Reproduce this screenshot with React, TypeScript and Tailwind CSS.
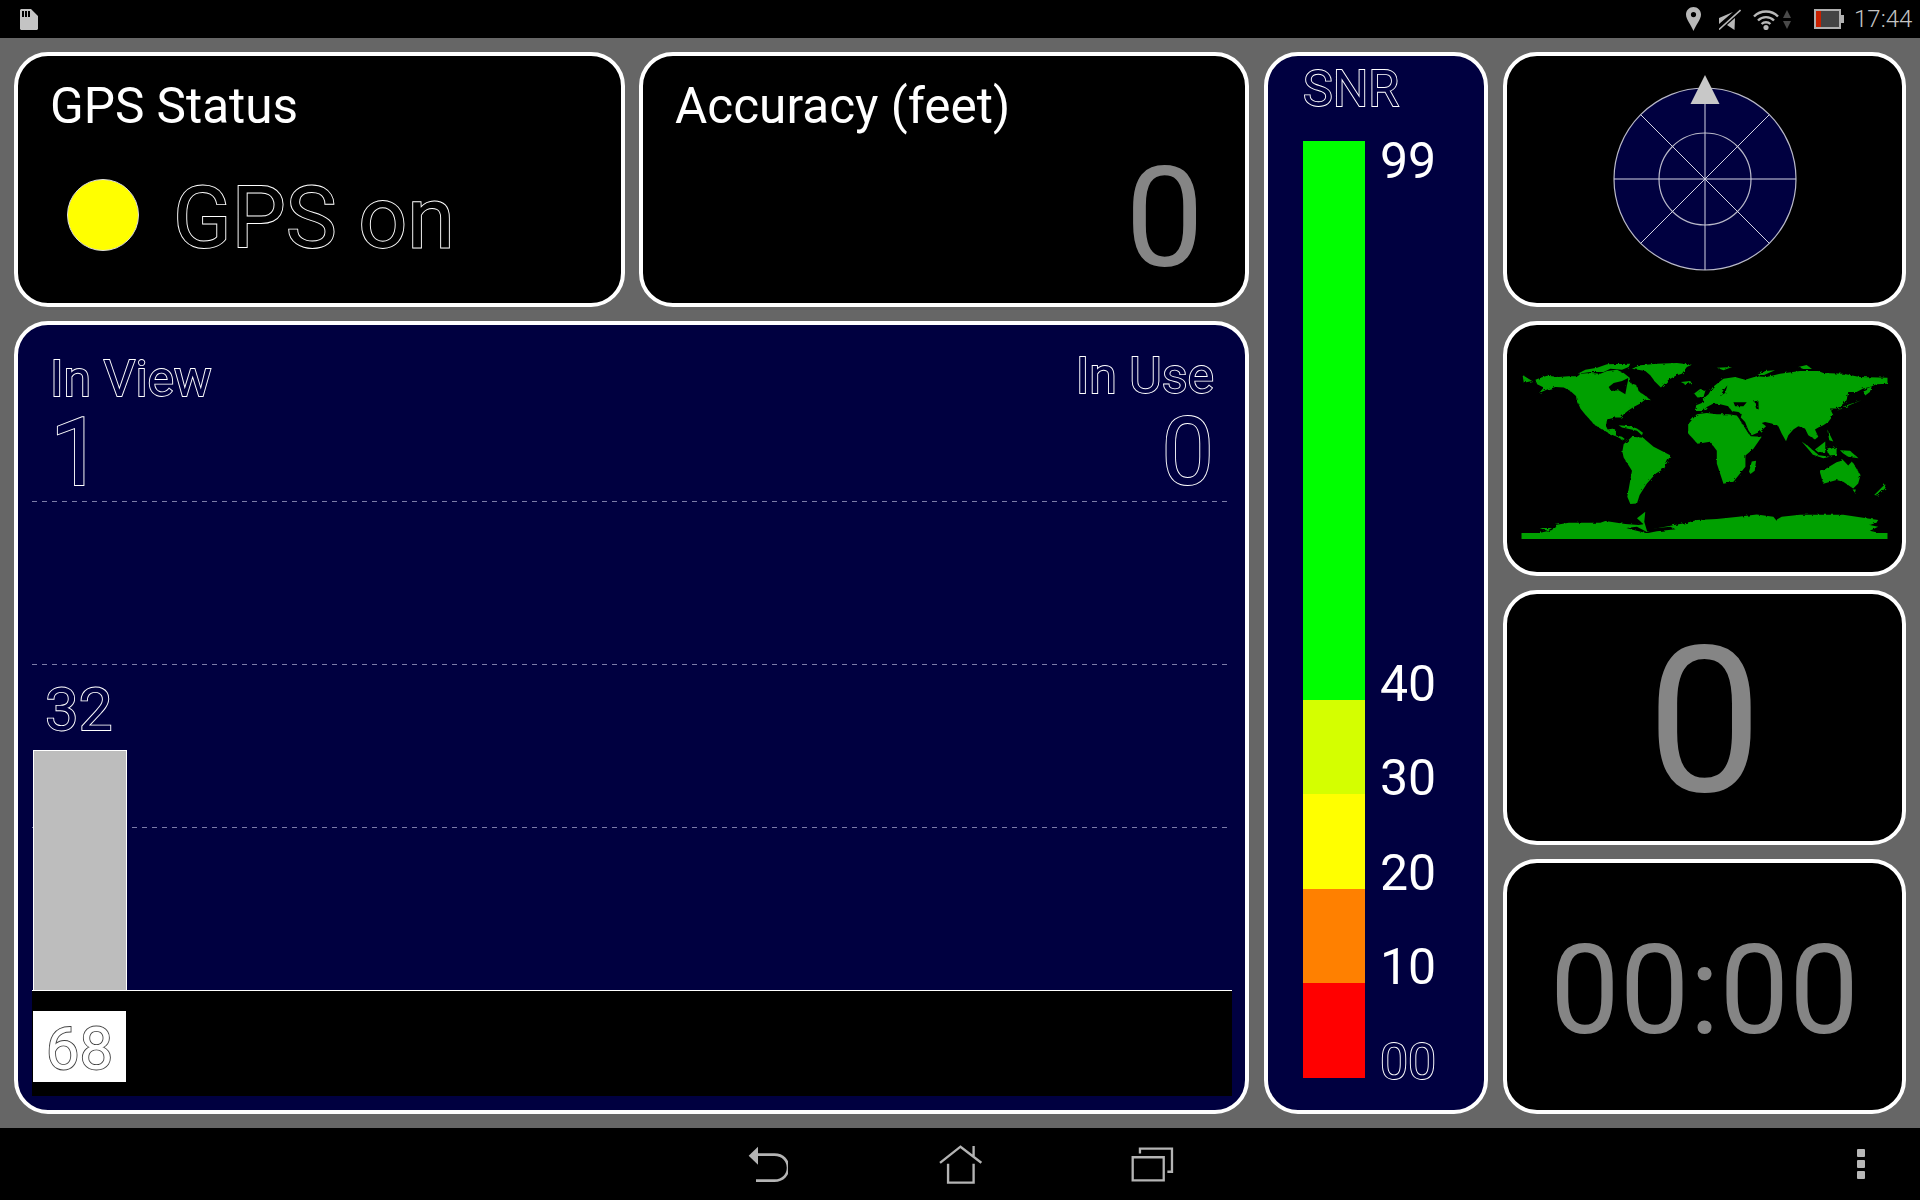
const outlineNavy = "text-[#000040] [-webkit-text-stroke:1.8px_#ffffff] [paint-order:stroke_fill]";
const outlineBlack = "text-black [-webkit-text-stroke:1.8px_#ffffff] [paint-order:stroke_fill]";
const outlineWhite = "text-white [-webkit-text-stroke:1.8px_#404040] [paint-order:stroke_fill]";
const card = "rounded-[34px] border-4 border-white";
const dashed =
  "absolute left-0 w-[1195px] h-px bg-[repeating-linear-gradient(90deg,#7c7ca8_0,#7c7ca8_5px,transparent_5px,transparent_10px)]";

const StatusIcons = () => (
  <div className="flex items-center h-full">
    {/* location pin */}
    <svg width="15" height="24" viewBox="0 0 15 24" className="ml-[1686px]">
      <path
        fillRule="evenodd"
        d="M7.5 0C3.4 0 0 3.3 0 7.5 0 12.5 5 17.5 7.5 24 10 17.5 15 12.5 15 7.5 15 3.3 11.6 0 7.5 0ZM7.5 5a2.6 2.6 0 1 1 0 5.2 2.6 2.6 0 0 1 0-5.2Z"
        fill="#b8b8b8"
      />
    </svg>
    {/* silent */}
    <svg width="22" height="21" viewBox="0 0 22 21" className="ml-[18px]">
      <path d="M0 9 14 3 0 15ZM8 16 16 9 15.5 21Z" fill="#b8b8b8" />
      <path d="M0 20.5 21.5 1" stroke="#b8b8b8" strokeWidth="1.6" />
    </svg>
    {/* wifi */}
    <svg width="26" height="21" viewBox="0 0 26 21" fill="none" stroke="#b8b8b8" className="ml-[12px]">
      <path d="M1 7.5C7.5 .8 18.5 .8 25 7.5" strokeWidth="2.4" />
      <path d="M5 11.5C9.5 7 16.5 7 21 11.5" strokeWidth="2.4" />
      <path d="M8.6 15C11 12.6 15 12.6 17.4 15" strokeWidth="2.4" />
      <circle cx="13" cy="18.5" r="2.6" fill="#b8b8b8" stroke="none" />
    </svg>
    <svg width="8" height="19" viewBox="0 0 8 19" className="ml-[4px]">
      <path d="M4 0 8 8 0 8Z M0 11 8 11 4 19Z" fill="#4a4a4a" />
    </svg>
    {/* battery */}
    <div className="ml-[23px] flex items-center">
      <div className="w-[27px] h-[20px] border-2 border-[#b0b0b0] bg-[#444] flex">
        <div className="w-[5px] bg-[#c82000]" />
      </div>
      <div className="w-[3px] h-[8px] bg-[#b0b0b0]" />
    </div>
    <span className="ml-[10px] font-['Roboto',sans-serif] font-light text-[24px] text-[#c4c4c4] leading-none">
      17:44
    </span>
  </div>
);

const SnrBar = () => {
  const rows = [
    { color: "bg-[#00ff00]", h: "h-[559px]", top: "99", bottom: "40" },
    { color: "bg-[#d4ff00]", h: "h-[94px]", bottom: "30" },
    { color: "bg-[#ffff00]", h: "h-[95px]", bottom: "20" },
    { color: "bg-[#ff8000]", h: "h-[94px]", bottom: "10" },
    { color: "bg-[#ff0000]", h: "h-[95px]", bottom: "00", hollow: true },
  ];
  return (
    <div className="mt-[27px] ml-[35px] flex flex-col">
      {rows.map((r) => (
        <div key={r.bottom} className={`flex ${r.h}`}>
          <div className={`w-[62px] ${r.color}`} />
          <div className="ml-[15px] flex flex-col justify-between text-[50px] leading-[50px] text-white">
            <span className="-mt-[5px]">{r.top}</span>
            <span className={`-mb-[9px] ${r.hollow ? outlineNavy : ""}`}>{r.bottom}</span>
          </div>
        </div>
      ))}
    </div>
  );
};

const Compass = () => (
  <svg width="190" height="200" viewBox="0 0 190 200">
    <circle cx="95" cy="108" r="91" fill="#000040" stroke="#b8b8c8" strokeWidth="1.2" />
    <circle cx="95" cy="108" r="46" fill="none" stroke="#b8b8c8" strokeWidth="1.2" />
    <path d="M4 108H186M95 17V199M30.7 43.7 159.3 172.3M159.3 43.7 30.7 172.3" stroke="#d4d4e4" strokeWidth="1" />
    <path d="M95 4 109.5 33H80.5Z" fill="#c8c8c8" />
  </svg>
);

// traced by hand from the picture, the filter roughens the coast lines
const WorldMap = () => (
  <svg width="367" height="176" viewBox="93 68 1100 529" fill="#00a000">
    <defs>
      <filter id="coast" x="-2%" y="-2%" width="104%" height="104%">
        <feTurbulence type="fractalNoise" baseFrequency="0.09" numOctaves="2" seed="4" />
        <feDisplacementMap in="SourceGraphic" scale="9" />
      </filter>
    </defs>
    <g filter="url(#coast)">
      {/* north america */}
      <path d="M96 104 125 122 100 127ZM135 118 150 112 170 106 205 110 235 108 262 108 270 100 300 98 330 100 350 92 380 88 400 98 418 112 420 128 440 135 445 152 470 170 482 180 465 178 450 190 430 200 415 210 400 222 392 232 375 232 350 238 347 258 352 268 370 265 378 272 375 285 395 290 408 300 395 298 380 290 355 280 325 262 308 250 300 240 282 220 270 205 262 185 260 170 240 152 220 142 195 140 170 148 146 158 160 142 140 132Z" />
      <path d="M262 100 285 88 320 82 350 72 420 70 415 80 395 88 360 85 340 95 300 95Z" />
      <path d="M385 255 420 258 440 265 458 278 455 285 440 272 410 265 395 262Z" />
      {/* greenland, iceland */}
      <path d="M425 85 450 75 500 70 560 68 605 73 590 80 575 100 560 105 535 118 512 142 495 125 480 105 465 92Z" />
      <path d="M572 125 600 122 604 128 585 132Z" />
      {/* south america */}
      <path d="M400 312 425 290 458 293 490 320 540 345 522 385 497 400 470 430 448 465 440 490 420 492 411 470 420 420 425 392 400 352 396 335Z" />
      {/* africa */}
      <path d="M594 252 620 222 650 218 680 222 715 222 740 226 760 252 782 288 815 290 790 326 766 346 766 380 730 425 700 431 680 370 680 332 660 305 622 311 594 280Z" />
      <path d="M785 364 798 362 794 392 781 402 777 395Z" />
      {/* eurasia */}
      <path d="M615 212 618 195 635 188 645 170 655 162 668 140 700 115 735 110 765 118 800 108 830 110 870 100 930 92 985 92 1000 98 1060 100 1110 110 1193 112 1193 130 1160 132 1140 140 1120 145 1100 155 1075 155 1070 180 1055 195 1040 205 1020 205 1030 225 1015 245 1000 255 985 262 975 268 985 290 975 298 955 285 945 265 925 258 910 268 895 285 888 303 875 280 865 258 845 250 825 245 815 248 828 258 810 275 785 285 775 270 765 245 752 232 755 222 745 215 725 212 715 198 690 192 670 190 650 200 640 212Z" />
      <path d="M612 160 630 146 646 150 640 170 622 172Z" />
      <path d="M680 82 726 80 700 90ZM802 104 826 92 855 90 822 104ZM925 80 950 74 966 86 940 86Z" />
      <path d="M1120 150 1146 138 1140 155 1126 166ZM1040 212 1070 195 1115 180 1085 192Z" />
      {/* south east asia */}
      <path d="M935 304 955 318 990 348 968 342ZM975 328 1006 304 1006 336 985 336ZM1012 268 1030 304 1018 300ZM965 342 1020 350 1000 354ZM1010 330 1040 320 1040 344 1020 346ZM1050 330 1080 332 1106 354 1075 350 1060 340Z" />
      {/* australia */}
      <path d="M990 396 1040 366 1060 360 1075 376 1086 364 1112 405 1105 430 1090 445 1060 425 1040 420 1000 431Z" />
      <path d="M1088 448 1098 448 1095 458ZM1153 465 1186 432 1187 444 1164 466Z" />
      {/* antarctica */}
      <path d="M150 578 185 570 195 555 235 548 330 548 345 543 405 552 445 555 460 553 440 535 465 515 462 545 470 572 500 565 590 548 620 540 680 537 745 530 800 523 850 530 858 540 875 530 930 524 1060 524 1100 530 1165 540 1160 548 1140 555 1165 560 1140 572 1165 578 1165 590 150 590Z" />
      <path d="M148 564 185 564 170 572Z" />
      {/* inland water */}
      <path d="M355 140 370 128 395 122 415 112 410 135 405 162 385 150 362 152Z" fill="#000" />
      <path d="M730 186 770 186 760 198 735 198ZM793 182 805 182 806 208 798 205ZM690 168 700 150 712 135 705 158Z" fill="#000" />
      <path d="M408 564 440 560 470 576 480 566 540 560 556 568 500 574 470 580 430 570Z" fill="#000" />
      <path d="M750 238 778 282" stroke="#000" strokeWidth="3" />
    </g>
    <path d="M93 579H1193V597H93Z" />
  </svg>
);

const Chart = () => (
  <div className="relative ml-[14px] w-[1200px] flex flex-col">
    <div className="relative h-[489px] flex items-end">
      <div className={`${dashed} top-0`} />
      <div className={`${dashed} top-[163px]`} />
      <div className={`${dashed} top-[326px]`} />
      <div className="relative ml-px w-[94px] h-[240px] bg-[#bdbdbd] border border-white border-b-0">
        <span className={`absolute left-[11px] -top-[71px] text-[60px] leading-[60px] ${outlineNavy}`}>32</span>
      </div>
    </div>
    <div className="h-[106px] bg-black border-t border-white pt-[20px] pl-px">
      <div className="w-[93px] h-[71px] bg-white flex items-center justify-center">
        <span className={`mt-[4px] text-[60px] leading-[60px] ${outlineWhite}`}>68</span>
      </div>
    </div>
  </div>
);

export default function App() {
  return (
    <div className="w-[1920px] h-[1200px] flex flex-col bg-[#666] font-['Roboto',sans-serif] overflow-hidden">
      <div className="h-[38px] bg-black relative flex items-center">
        <svg width="18" height="21" viewBox="0 0 18 21" className="absolute left-[20px] top-[9px]">
          <path
            fillRule="evenodd"
            d="M1 0H11L18 7V20L17 21H1L0 20V1ZM2 2V8H4V2ZM5 2V8H7V2ZM8 2V8H10V2Z"
            fill="#c4c4c4"
          />
        </svg>
        <StatusIcons />
      </div>

      <div className="flex-1 py-[14px] pl-[14px] flex gap-[14px]">
        <div className="w-[1235px] flex flex-col gap-[14px]">
          <div className="h-[255px] flex gap-[14px]">
            <div className={`${card} w-[611px] bg-black pt-[23px] text-white`}>
              <div className="pl-[32px] text-[49.5px] leading-[54px]">GPS Status</div>
              <div className="mt-[36px] pl-[49px] flex items-center gap-[34px]">
                <div className="w-[72px] h-[72px] rounded-full bg-[#ffff00] border border-[#ddd]" />
                <span className={`mt-[6px] text-[86px] leading-[85px] ${outlineBlack}`}>GPS on</span>
              </div>
            </div>
            <div className={`${card} w-[610px] bg-black pt-[23px] text-white`}>
              <div className="pl-[32px] text-[49.5px] leading-[54px]">Accuracy (feet)</div>
              <div className="mt-[15px] pr-[41px] text-right text-[140px] leading-[140px] text-[#858585]">0</div>
            </div>
          </div>

          <div className={`${card} flex-1 bg-[#000040] flex flex-col`}>
            <div className="h-[176px] pl-[32px] pr-[31px] flex justify-between">
              <div className="flex flex-col">
                <span className={`mt-[29px] text-[50px] leading-[50px] ${outlineNavy}`}>In View</span>
                <span className={`mt-[2px] text-[94px] leading-[94px] ${outlineNavy}`}>1</span>
              </div>
              <div className="flex flex-col items-end">
                <span className={`mt-[26px] text-[50px] leading-[50px] ${outlineNavy}`}>In Use</span>
                <span className={`mt-[4px] text-[94px] leading-[94px] ${outlineNavy}`}>0</span>
              </div>
            </div>
            <Chart />
          </div>
        </div>

        <div className={`${card} ml-px w-[224px] bg-[#000040] pt-[8px] flex flex-col`}>
          <div className={`pl-[35px] text-[50px] leading-[50px] ${outlineNavy}`}>SNR</div>
          <SnrBar />
        </div>

        <div className="ml-px w-[403px] flex flex-col gap-[14px]">
          <div className={`${card} h-[255px] bg-black flex items-start justify-center pt-[15px]`}>
            <Compass />
          </div>
          <div className={`${card} h-[255px] bg-black flex items-center justify-center pt-[5px]`}>
            <WorldMap />
          </div>
          <div className={`${card} h-[255px] bg-black flex items-center justify-center pt-[7px] text-[205px] leading-none text-[#858585]`}>
            0
          </div>
          <div className={`${card} h-[255px] bg-black flex items-center justify-center pt-[9px] text-[124px] leading-none text-[#858585]`}>
            00:00
          </div>
        </div>
      </div>

      <div className="h-[72px] bg-black flex items-center">
        <div className="ml-[672px] w-[192px] flex justify-center">
          <svg width="40" height="36" viewBox="146 76 120 108" fill="none" stroke="#b4b4b4" strokeWidth="8">
            <path d="M148 105 176 78V132Z" fill="#b4b4b4" stroke="none" />
            <path d="M170 102H225C280 102 280 180 225 180H170" />
          </svg>
        </div>
        <div className="w-[192px] flex justify-center">
          <svg width="43" height="39" viewBox="714 72 128 116" fill="none" stroke="#b4b4b4" strokeWidth="7">
            <path d="M717 125 778 77 840 125M741 128V184H817V128M817 75V105" />
          </svg>
        </div>
        <div className="w-[192px] flex justify-center">
          <svg width="43" height="35" viewBox="1293 78 130 106" fill="none" stroke="#b4b4b4" strokeWidth="7">
            <path d="M1298 109H1392V179H1298ZM1320 98V83H1417V153H1403" />
          </svg>
        </div>
        <div className="ml-[609px] flex flex-col gap-[3px]">
          <div className="w-[8px] h-[8px] rounded-[1px] bg-[#b8b8b8]" />
          <div className="w-[8px] h-[8px] rounded-[1px] bg-[#b8b8b8]" />
          <div className="w-[8px] h-[8px] rounded-[1px] bg-[#b8b8b8]" />
        </div>
      </div>
    </div>
  );
}
